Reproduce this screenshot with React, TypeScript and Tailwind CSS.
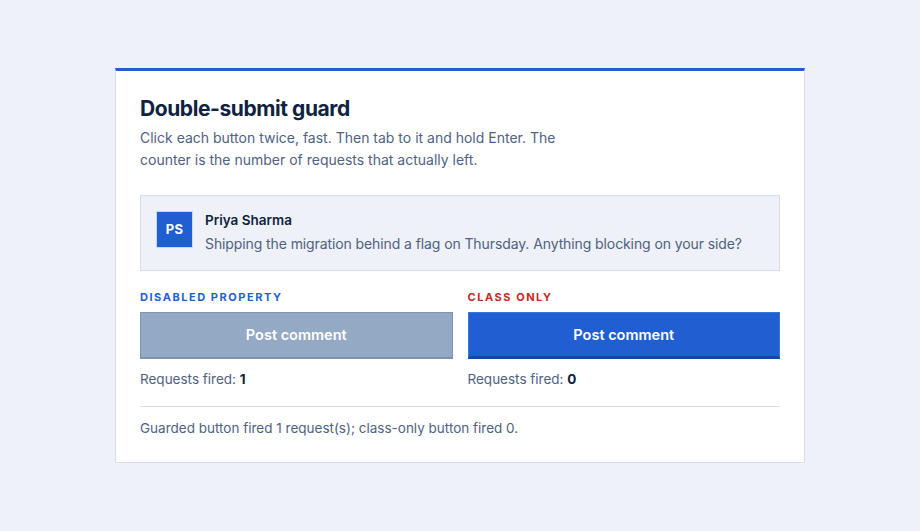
export default function App() {
  return (
    <div
      className="flex min-h-screen items-start justify-center bg-[#eef1f8] pt-[68px]"
      style={{ fontFamily: "Inter, 'Noto Sans', sans-serif" }}
    >
      <section className="w-[690px] border border-t-[3px] border-[#d3ddec] border-t-[#1f5fd1] bg-white px-6 pb-6 pt-6">
        <h1 className="text-[21px] font-bold leading-7 tracking-[-0.02em] text-[#0f2340]">
          Double-submit guard
        </h1>
        <p className="mt-1 max-w-[430px] text-[14px] leading-[22px] text-[#4f6281]">
          Click each button twice, fast. Then tab to it and hold Enter. The counter is the number of requests that actually left.
        </p>

        {/* comment preview */}
        <div className="mt-6 flex gap-3 border border-[#d3ddec] bg-[#eef1f8] p-[15px]">
          <div className="flex h-[37px] w-[37px] shrink-0 items-center justify-center border border-[#c9d6ec] bg-[#1f5fd1] text-[13px] font-bold tracking-wide text-white">
            PS
          </div>
          <div>
            <div className="text-[13.5px] font-semibold leading-[18px] text-[#0f2340]">Priya Sharma</div>
            <div className="mt-1 whitespace-nowrap text-[14px] leading-[22px] tracking-[-0.1px] text-[#4f6281]">
              Shipping the migration behind a flag on Thursday. Anything blocking on your side?
            </div>
          </div>
        </div>

        <div className="mt-[18px] grid grid-cols-2 gap-[15px]">
          <div>
            <div className="text-[11px] font-bold uppercase leading-4 tracking-[0.14em] text-[#1f5fd1]">
              Disabled property
            </div>
            <button
              aria-disabled="true"
              className="mt-[7px] h-[47px] w-full border border-[#7d93b2] border-b-2 bg-[#94a9c4] text-[14.5px] font-semibold text-white"
            >
              Post comment
            </button>
            <div className="mt-[10px] text-[13.5px] leading-5 text-[#4f6281]">
              Requests fired: <b className="font-bold text-[#0f2340]">1</b>
            </div>
          </div>
          <div>
            <div className="text-[11px] font-bold uppercase leading-4 tracking-[0.14em] text-[#c62a22]">
              Class only
            </div>
            <button className="mt-[7px] h-[47px] w-full border border-[#3a74dc] border-b-[3px] border-b-[#1448a8] bg-[#1f5fd1] text-[14.5px] font-semibold text-white">
              Post comment
            </button>
            <div className="mt-[10px] text-[13.5px] leading-5 text-[#4f6281]">
              Requests fired: <b className="font-bold text-[#0f2340]">0</b>
            </div>
          </div>
        </div>

        <div className="mt-[17px] border-t border-[#d3ddec] pt-[11px] text-[13.5px] leading-5 text-[#4f6281]">
          Guarded button fired 1 request(s); class-only button fired 0.
        </div>
      </section>
    </div>
  );
}
